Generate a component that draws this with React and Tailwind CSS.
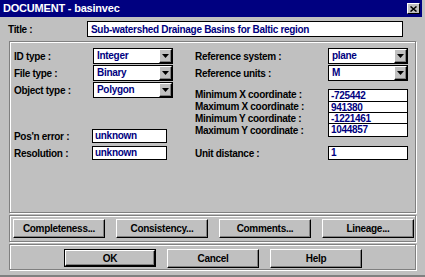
import React from "react";

const font = "font-['Liberation_Sans',Arial,sans-serif] font-bold text-[10px] tracking-[-0.3px]";

function Arrow() {
  return (
    <svg width="7" height="4" viewBox="0 0 7 4">
      <polygon points="0,0 7,0 3.5,4" fill="#000" />
    </svg>
  );
}

function Dropdown({ value, w = "w-[80px]" }) {
  return (
    <div className={`${w} h-[16px] bg-white border border-black flex items-center`}>
      <span className="flex-1 pl-[3px] text-[#000080] leading-none">{value}</span>
      <div className="w-[13px] h-[14px] bg-[#c0c0c0] border border-t-white border-l-white border-r-black border-b-black shadow-[inset_-1px_-1px_0_#808080] flex items-center justify-center">
        <Arrow />
      </div>
    </div>
  );
}

function Field({ value, w = "w-[80px]", h = "h-[14px]" }) {
  return (
    <div className={`${w} ${h} bg-white border border-black flex items-center pl-[2px] text-[#000080] leading-none`}>
      {value}
    </div>
  );
}

function Btn({ children, def }) {
  return (
    <div
      className={`w-[92px] ${def ? "h-[18px] border border-black" : "h-[19px]"} flex`}
    >
      <div className="flex-1 border border-t-white border-l-white border-r-black border-b-black shadow-[inset_-1px_-1px_0_#808080] flex items-center justify-center text-black">
        {children}
      </div>
    </div>
  );
}

export default function App() {
  return (
    <div className={`w-[425px] h-[277px] bg-[#c0c0c0] overflow-hidden ${font} text-black`}>
      <div className="w-[425px] h-[277px] pr-[3px] border-b-2 border-b-[#808080] flex flex-col">
        {/* title bar */}
        <div className="h-[17px] bg-[#000080] flex items-center pl-[3px] pr-[2px] shrink-0">
          <span className="text-white text-[11px] tracking-[-0.2px] flex-1">DOCUMENT - basinvec</span>
          <div className="w-[13px] h-[11px] bg-[#c0c0c0] border border-t-white border-l-white border-r-black border-b-black flex items-center justify-center">
            <svg width="7" height="6" viewBox="0 0 7 6">
              <path d="M0.5 0.5 L6.5 5.5 M6.5 0.5 L0.5 5.5" stroke="#000" strokeWidth="1.5" />
            </svg>
          </div>
        </div>

        {/* title row */}
        <div className="flex items-center mt-[4px] h-[16px]">
          <span className="ml-[8px] w-[79px]">Title :</span>
          <div className="w-[316px] h-[16px] bg-white border border-black flex items-center pl-[3px] text-[#000080]">
            Sub-watershed Drainage Basins for Baltic region
          </div>
        </div>

        {/* main frame */}
        <div className="ml-[9px] mt-[4px] w-[407px] h-[172px] border border-[#808080] shadow-[inset_1px_1px_0_#fff,1px_1px_0_#fff] flex pt-[6px] pl-[4px]">
          {/* left column */}
          <div className="w-[181px] flex flex-col">
            <div className="flex items-center h-[16px]">
              <span className="w-[79px]">ID type :</span>
              <Dropdown value="Integer" />
            </div>
            <div className="flex items-center h-[16px] mt-[1px]">
              <span className="w-[79px]">File type :</span>
              <Dropdown value="Binary" />
            </div>
            <div className="flex items-center h-[16px] mt-[1px]">
              <span className="w-[79px]">Object type :</span>
              <Dropdown value="Polygon" />
            </div>
            <div className="flex items-center h-[14px] mt-[31px]">
              <span className="w-[78px]">Pos'n error :</span>
              <Field value="unknown" w="w-[75px]" />
            </div>
            <div className="flex items-center h-[14px] mt-[3px]">
              <span className="w-[78px]">Resolution :</span>
              <Field value="unknown" w="w-[75px]" />
            </div>
          </div>
          {/* right column */}
          <div className="flex flex-col">
            <div className="flex items-center h-[16px]">
              <span className="w-[133px]">Reference system :</span>
              <Dropdown value="plane" />
            </div>
            <div className="flex items-center h-[16px] mt-[1px]">
              <span className="w-[133px]">Reference units :</span>
              <Dropdown value="M" />
            </div>
            <div className="flex mt-[8px]">
              <div className="w-[133px] flex flex-col">
                <span className="h-[12px] leading-[12px]">Minimum X coordinate :</span>
                <span className="h-[12px] leading-[12px]">Maximum X coordinate :</span>
                <span className="h-[12px] leading-[12px]">Minimum Y coordinate :</span>
                <span className="h-[12px] leading-[12px]">Maximum Y coordinate :</span>
              </div>
              <div className="w-[80px] flex flex-col border border-black bg-white text-[#000080]">
                <div className="h-[12px] flex items-center pl-[2px] border-b border-black">-725442</div>
                <div className="h-[11px] flex items-center pl-[2px] border-b border-black">941380</div>
                <div className="h-[11px] flex items-center pl-[2px] border-b border-black">-1221461</div>
                <div className="h-[11px] flex items-center pl-[2px]">1044857</div>
              </div>
            </div>
            <div className="flex items-center h-[14px] mt-[9px]">
              <span className="w-[133px]">Unit distance :</span>
              <Field value="1" />
            </div>
          </div>
        </div>

        {/* buttons frame */}
        <div className="ml-[9px] mt-[2px] w-[407px] h-[27px] border border-[#808080] shadow-[inset_1px_1px_0_#fff,1px_1px_0_#fff] flex items-start pt-[3px] pl-[3px] gap-[11px]">
          <Btn>Completeness...</Btn>
          <Btn>Consistency...</Btn>
          <Btn>Comments...</Btn>
          <Btn>Lineage...</Btn>
        </div>

        {/* bottom frame */}
        <div className="ml-[9px] mt-[2px] w-[407px] h-[26px] border border-[#808080] shadow-[inset_1px_1px_0_#fff,1px_1px_0_#fff] flex items-start pt-[4px] pl-[54px] gap-[11px]">
          <Btn def>OK</Btn>
          <Btn>Cancel</Btn>
          <Btn>Help</Btn>
        </div>
      </div>
    </div>
  );
}
